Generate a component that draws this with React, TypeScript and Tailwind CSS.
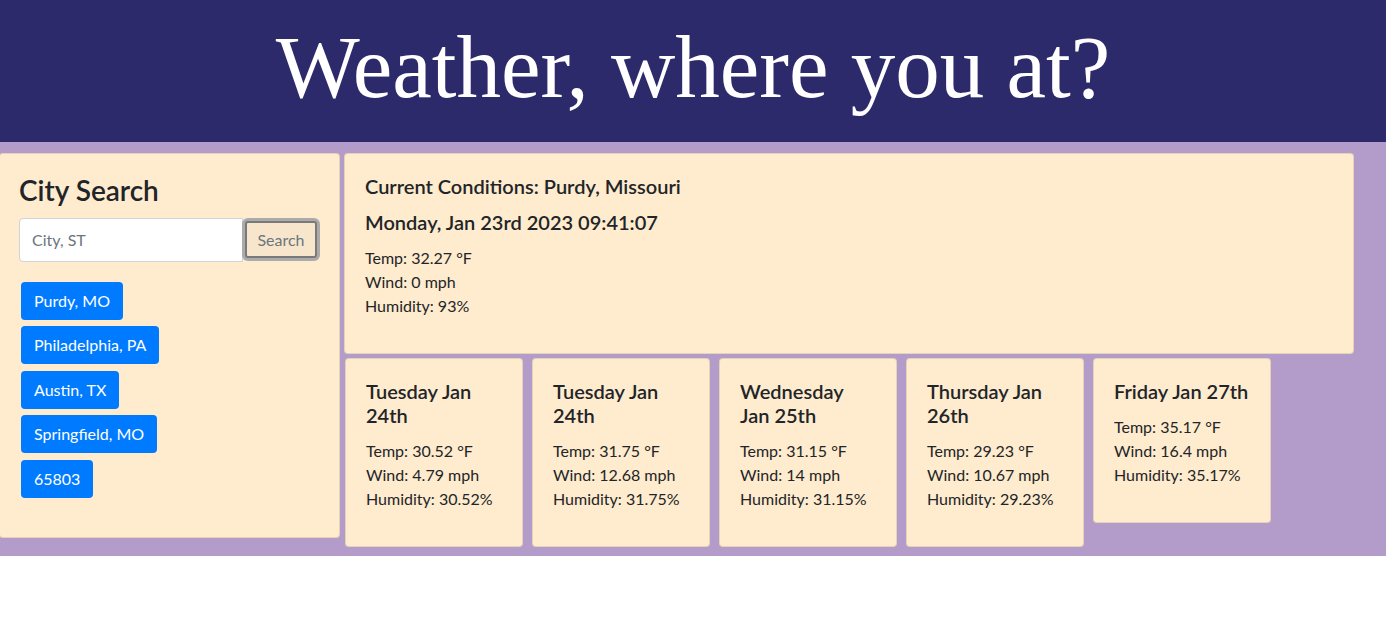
import React from "react";

const cities = ["Purdy, MO", "Philadelphia, PA", "Austin, TX", "Springfield, MO", "65803"];

const forecast = [
  { day: "Tuesday Jan 24th", temp: "30.52", wind: "4.79", hum: "30.52" },
  { day: "Tuesday Jan 24th", temp: "31.75", wind: "12.68", hum: "31.75" },
  { day: "Wednesday Jan 25th", temp: "31.15", wind: "14", hum: "31.15" },
  { day: "Thursday Jan 26th", temp: "29.23", wind: "10.67", hum: "29.23" },
  { day: "Friday Jan 27th", temp: "35.17", wind: "16.4", hum: "35.17" },
];

function App() {
  return (
    <div className="min-h-screen bg-white text-[#212529] font-['Lato','Noto_Sans',sans-serif]">
      {/* header */}
      <header className="h-[142px] bg-[#2d2a6b] flex items-center justify-center">
        <h1 className="text-white font-['Liberation_Serif',serif] text-[89px] leading-none pb-[8px]">
          Weather, where you at?
        </h1>
      </header>

      <main className="bg-[#b39cca] flex items-start gap-[4px] pt-[11px] pb-[9px]">
        {/* search panel */}
        <aside className="w-[341px] ml-[-1px] bg-[#ffebcd] border border-black/10 rounded-[4px] pt-[20px] pl-[19px] pr-[20px] pb-[39px]">
          <h3 className="text-[28px] font-semibold leading-[1.2] mb-[10px]">City Search</h3>
          <div className="flex items-center">
            <input
              type="text"
              placeholder="City, ST"
              className="w-[224px] h-[44px] bg-white border border-[#ced4da] rounded-l-[4px] px-[12px] text-[16px] placeholder:text-[#6c757d] outline-none"
            />
            <button className="ml-[2px] w-[72px] h-[37px] bg-[#f7e6cc] border-2 border-[#7a7a7a] rounded-[3px] ring-[3px] ring-[#ababab] text-[16px] text-[#6c757d]">
              Search
            </button>
          </div>
          <div className="flex flex-col items-start gap-[6.5px] mt-[20px] pl-[2px]">
            {cities.map((c) => (
              <button
                key={c}
                className="h-[38px] px-[13px] rounded-[4px] bg-[#007bff] text-white text-[16px]"
              >
                {c}
              </button>
            ))}
          </div>
        </aside>

        {/* weather */}
        <section className="w-[1010px] flex flex-col gap-[4px]">
          <div className="bg-[#ffebcd] border border-black/10 rounded-[4px] px-[20px] pt-[20px] pb-[35px]">
            <h5 className="text-[20px] font-semibold leading-[24px] mb-[12px]">
              Current Conditions: Purdy, Missouri
            </h5>
            <h4 className="text-[20px] font-semibold leading-[24px] mb-[12px]">
              Monday, Jan 23rd 2023 09:41:07
            </h4>
            <p className="text-[16px] leading-[24px]">Temp: 32.27 °F</p>
            <p className="text-[16px] leading-[24px]">Wind: 0 mph</p>
            <p className="text-[16px] leading-[24px]">Humidity: 93%</p>
          </div>

          <div className="flex items-start gap-[9px] pl-[1px]">
            {forecast.map((f, i) => (
              <div
                key={i}
                className="w-[178px] bg-[#ffebcd] border border-black/10 rounded-[4px] px-[20px] pt-[20px] pb-[35px]"
              >
                <h5 className="text-[20px] font-semibold leading-[24px] mb-[12px]">{f.day}</h5>
                <p className="text-[16px] leading-[24px]">Temp: {f.temp} °F</p>
                <p className="text-[16px] leading-[24px]">Wind: {f.wind} mph</p>
                <p className="text-[16px] leading-[24px]">Humidity: {f.hum}%</p>
              </div>
            ))}
          </div>
        </section>
      </main>
    </div>
  );
}

export default App;
